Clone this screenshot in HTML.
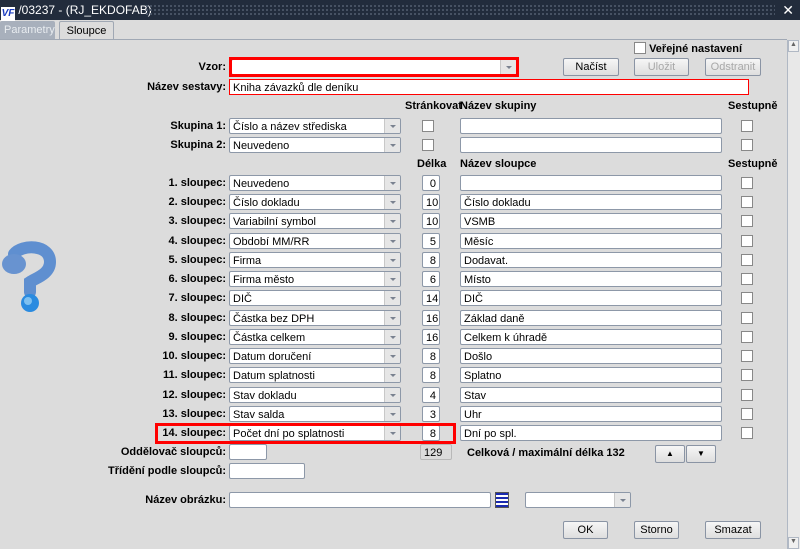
<!DOCTYPE html>
<html><head><meta charset="utf-8"><style>
*{box-sizing:border-box;margin:0;padding:0}
body{width:800px;height:549px;background:#dcdcdc;font-family:"Liberation Sans",sans-serif;font-size:11px;position:relative;overflow:hidden;color:#000}
.a{position:absolute}
.title{left:0;top:0;width:800px;height:20px;background:#222c3c;color:#fff;font-size:12px;line-height:20px}
.dots{left:145px;top:4px;width:630px;height:12px;background-image:radial-gradient(#4a5566 1px,transparent 1.2px);background-size:4px 4px}
.lbl{text-align:right;font-weight:bold;width:200px;line-height:16px}
.in{background:#fff;border:1px solid #8d98a8;border-radius:2px;height:16px;line-height:16px;padding-left:3px;white-space:nowrap;overflow:hidden}
.cb{width:172px}
.cb::after{content:"";position:absolute;right:0;top:0;width:15px;height:14px;background:#e6e6e6;border-left:1px solid #c8c8c8}
.cb::before{content:"";position:absolute;right:4px;top:6px;border:3.5px solid transparent;border-top:3.5px solid #7a8290;z-index:2}
.num{width:18px;text-align:right;padding-right:3px}
.nm{width:262px}
.ck{width:12px;height:12px;background:#fff;border:1px solid #888}
.hd{font-weight:bold;line-height:14px}
.btn{height:18px;border:1px solid #8a94a4;border-radius:2px;background:linear-gradient(#f6f6f6,#dedede);text-align:center;line-height:16px;font-size:11px}
.dis{color:#a8a8a8}
</style></head><body>
<div class="a title"><span style="display:inline-block;width:14px;height:14px;background:#fff;color:#1a3cc0;font-weight:bold;font-style:italic;font-size:10px;line-height:14px;text-align:center;vertical-align:-2px;margin-left:1px">VF</span> /03237 - (RJ_EKDOFAB)</div>
<div class="a dots"></div>
<div class="a" style="right:6px;top:1px;color:#fff;font-size:14px;line-height:18px">✕</div>
<div class="a" style="left:0;top:21px;width:55px;height:18px;background:#a8b0bc;color:#e8ecf0;line-height:18px;padding-left:4px;border-radius:2px 2px 0 0">Parametry</div>
<div class="a" style="left:59px;top:21px;width:55px;height:19px;background:#dcdcdc;border:1px solid #a0a8b4;border-bottom:none;line-height:18px;text-align:center;border-radius:2px 2px 0 0">Sloupce</div>
<div class="a" style="left:0;top:39px;width:787px;height:1px;background:#a0a8b4"></div>
<div class="a" style="left:787px;top:40px;width:13px;height:509px;background:#e8e8e8;border-left:1px solid #b0b8c4"></div>
<div class="a" style="left:788px;top:40px;width:11px;height:12px;background:#f0f0f0;border:1px solid #b0b8c4;font-size:7px;text-align:center;color:#666">▲</div>
<div class="a" style="left:788px;top:537px;width:11px;height:12px;background:#f0f0f0;border:1px solid #b0b8c4;font-size:7px;text-align:center;color:#666">▼</div>
<svg class="a" style="left:0;top:240px" width="60" height="75"><path d="M14 14 C22 4 50 4 50 22 C50 34 36 38 30 42 L30 52" fill="none" stroke="#5f8fd0" stroke-width="12" stroke-linecap="round"/><ellipse cx="14" cy="24" rx="12" ry="10" fill="#6893d0"/><circle cx="30" cy="63" r="9" fill="#2a8be0"/><circle cx="28" cy="61" r="4" fill="#7ec0f0"/></svg>

<div class="a" style="left:634px;top:42px;" ><div class="ck" style="display:inline-block;vertical-align:-2px"></div> <b>Veřejné nastavení</b></div>
<div class="a lbl" style="left:26px;top:59px">Vzor:</div>
<div class="a in cb" style="left:231px;top:59px;width:286px"></div>
<div class="a" style="left:229px;top:57px;width:290px;height:20px;border:3px solid #f00"></div>
<div class="a btn" style="left:563px;top:58px;width:56px">Načíst</div>
<div class="a btn dis" style="left:634px;top:58px;width:55px">Uložit</div>
<div class="a btn dis" style="left:705px;top:58px;width:56px">Odstranit</div>
<div class="a lbl" style="left:26px;top:79px">Název sestavy:</div>
<div class="a in" style="left:229px;top:79px;width:520px;border:1px solid #f00;border-radius:0">Kniha závazků dle deníku</div>

<div class="a hd" style="left:405px;top:99px">Stránkovat</div>
<div class="a hd" style="left:460px;top:99px">Název skupiny</div>
<div class="a hd" style="left:728px;top:99px">Sestupně</div>
<div class="a lbl" style="left:26px;top:118px">Skupina 1:</div><div class="a in cb" style="left:229px;top:118px">Číslo a název střediska</div><div class="a ck" style="left:422px;top:120px"></div><div class="a in nm" style="left:460px;top:118px"></div><div class="a ck" style="left:741px;top:120px"></div>
<div class="a lbl" style="left:26px;top:137px">Skupina 2:</div><div class="a in cb" style="left:229px;top:137px">Neuvedeno</div><div class="a ck" style="left:422px;top:139px"></div><div class="a in nm" style="left:460px;top:137px"></div><div class="a ck" style="left:741px;top:139px"></div>

<div class="a hd" style="left:417px;top:157px">Délka</div>
<div class="a hd" style="left:460px;top:157px">Název sloupce</div>
<div class="a hd" style="left:728px;top:157px">Sestupně</div>

<div class="a lbl" style="left:26px;top:175px">1. sloupec:</div><div class="a in cb" style="left:229px;top:175px">Neuvedeno</div><div class="a in num" style="left:422px;top:175px">0</div><div class="a in nm" style="left:460px;top:175px"></div><div class="a ck" style="left:741px;top:177px"></div>
<div class="a lbl" style="left:26px;top:194px">2. sloupec:</div><div class="a in cb" style="left:229px;top:194px">Číslo dokladu</div><div class="a in num" style="left:422px;top:194px">10</div><div class="a in nm" style="left:460px;top:194px">Číslo dokladu</div><div class="a ck" style="left:741px;top:196px"></div>
<div class="a lbl" style="left:26px;top:213px">3. sloupec:</div><div class="a in cb" style="left:229px;top:213px">Variabilní symbol</div><div class="a in num" style="left:422px;top:213px">10</div><div class="a in nm" style="left:460px;top:213px">VSMB</div><div class="a ck" style="left:741px;top:215px"></div>
<div class="a lbl" style="left:26px;top:233px">4. sloupec:</div><div class="a in cb" style="left:229px;top:233px">Období MM/RR</div><div class="a in num" style="left:422px;top:233px">5</div><div class="a in nm" style="left:460px;top:233px">Měsíc</div><div class="a ck" style="left:741px;top:235px"></div>
<div class="a lbl" style="left:26px;top:252px">5. sloupec:</div><div class="a in cb" style="left:229px;top:252px">Firma</div><div class="a in num" style="left:422px;top:252px">8</div><div class="a in nm" style="left:460px;top:252px">Dodavat.</div><div class="a ck" style="left:741px;top:254px"></div>
<div class="a lbl" style="left:26px;top:271px">6. sloupec:</div><div class="a in cb" style="left:229px;top:271px">Firma město</div><div class="a in num" style="left:422px;top:271px">6</div><div class="a in nm" style="left:460px;top:271px">Místo</div><div class="a ck" style="left:741px;top:273px"></div>
<div class="a lbl" style="left:26px;top:290px">7. sloupec:</div><div class="a in cb" style="left:229px;top:290px">DIČ</div><div class="a in num" style="left:422px;top:290px">14</div><div class="a in nm" style="left:460px;top:290px">DIČ</div><div class="a ck" style="left:741px;top:292px"></div>
<div class="a lbl" style="left:26px;top:310px">8. sloupec:</div><div class="a in cb" style="left:229px;top:310px">Částka bez DPH</div><div class="a in num" style="left:422px;top:310px">16</div><div class="a in nm" style="left:460px;top:310px">Základ daně</div><div class="a ck" style="left:741px;top:312px"></div>
<div class="a lbl" style="left:26px;top:329px">9. sloupec:</div><div class="a in cb" style="left:229px;top:329px">Částka celkem</div><div class="a in num" style="left:422px;top:329px">16</div><div class="a in nm" style="left:460px;top:329px">Celkem k úhradě</div><div class="a ck" style="left:741px;top:331px"></div>
<div class="a lbl" style="left:26px;top:348px">10. sloupec:</div><div class="a in cb" style="left:229px;top:348px">Datum doručení</div><div class="a in num" style="left:422px;top:348px">8</div><div class="a in nm" style="left:460px;top:348px">Došlo</div><div class="a ck" style="left:741px;top:350px"></div>
<div class="a lbl" style="left:26px;top:367px">11. sloupec:</div><div class="a in cb" style="left:229px;top:367px">Datum splatnosti</div><div class="a in num" style="left:422px;top:367px">8</div><div class="a in nm" style="left:460px;top:367px">Splatno</div><div class="a ck" style="left:741px;top:369px"></div>
<div class="a lbl" style="left:26px;top:387px">12. sloupec:</div><div class="a in cb" style="left:229px;top:387px">Stav dokladu</div><div class="a in num" style="left:422px;top:387px">4</div><div class="a in nm" style="left:460px;top:387px">Stav</div><div class="a ck" style="left:741px;top:389px"></div>
<div class="a lbl" style="left:26px;top:406px">13. sloupec:</div><div class="a in cb" style="left:229px;top:406px">Stav salda</div><div class="a in num" style="left:422px;top:406px">3</div><div class="a in nm" style="left:460px;top:406px">Uhr</div><div class="a ck" style="left:741px;top:408px"></div>
<div class="a lbl" style="left:26px;top:425px">14. sloupec:</div><div class="a in cb" style="left:229px;top:425px">Počet dní po splatnosti</div><div class="a in num" style="left:422px;top:425px">8</div><div class="a in nm" style="left:460px;top:425px">Dní po spl.</div><div class="a ck" style="left:741px;top:427px"></div>
<div class="a" style="left:155px;top:423px;width:301px;height:21px;border:3px solid #f00"></div>

<div class="a lbl" style="left:26px;top:444px">Oddělovač sloupců:</div><div class="a in" style="left:229px;top:444px;width:38px"></div>
<div class="a in" style="left:420px;top:444px;width:32px;background:#dcdcdc;border-color:#b8b8b8">129</div>
<div class="a hd" style="left:467px;top:446px">Celková / maximální délka 132</div>
<div class="a btn" style="left:655px;top:445px;width:30px;font-size:8px">▲</div>
<div class="a btn" style="left:686px;top:445px;width:30px;font-size:8px">▼</div>
<div class="a lbl" style="left:26px;top:463px">Třídění podle sloupců:</div><div class="a in" style="left:229px;top:463px;width:76px"></div>
<div class="a lbl" style="left:26px;top:492px">Název obrázku:</div><div class="a in" style="left:229px;top:492px;width:262px"></div>
<div class="a" style="left:495px;top:492px;width:14px;height:16px;background:repeating-linear-gradient(#1a2ab0 0 2px,#fff 2px 4px);border:1px solid #555"></div>
<div class="a in cb" style="left:525px;top:492px;width:106px"></div>
<div class="a btn" style="left:563px;top:521px;width:45px">OK</div>
<div class="a btn" style="left:634px;top:521px;width:45px">Storno</div>
<div class="a btn" style="left:705px;top:521px;width:56px">Smazat</div>
</body></html>
